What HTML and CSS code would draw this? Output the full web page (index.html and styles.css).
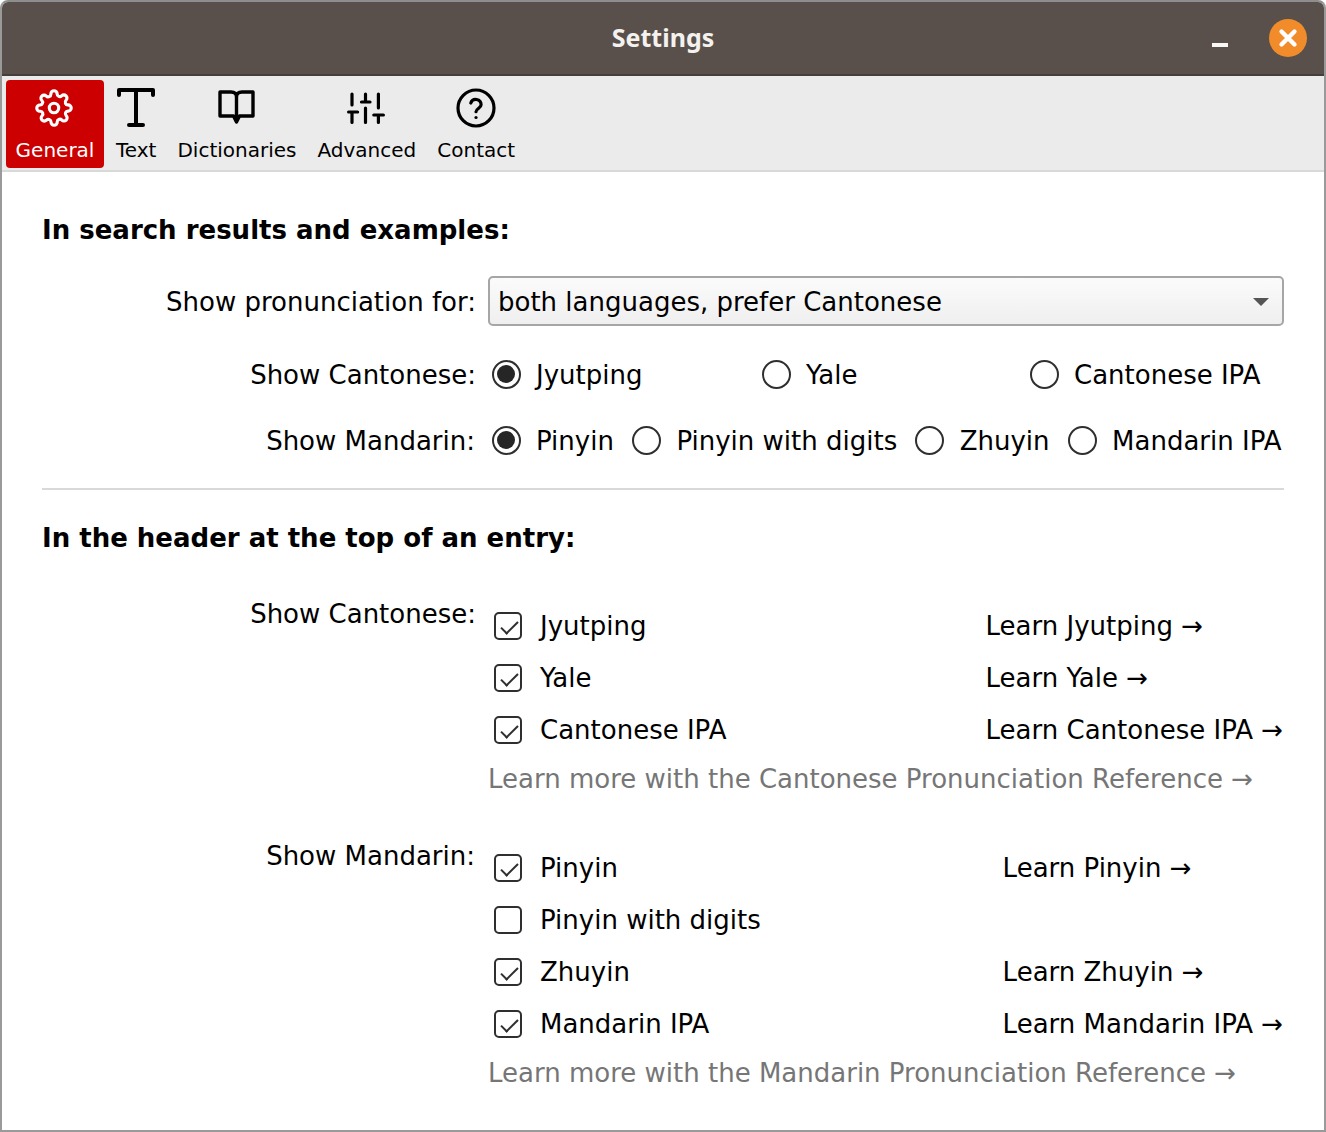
FILE: index.html
```html
<!DOCTYPE html>
<html lang="en">
<head>
<meta charset="utf-8">
<title>Settings</title>
<link rel="stylesheet" href="styles.css">
</head>
<body>
<div class="window">
  <header class="titlebar">
    <h1 class="title">Settings</h1>
    <div class="controls">
      <span class="minimize"></span>
      <span class="close">
        <svg viewBox="0 0 38 38" width="38" height="38"><path d="M12.5 12.5 25.5 25.5M25.5 12.5 12.5 25.5" stroke="#fff" stroke-width="4.4" stroke-linecap="round" fill="none"/></svg>
      </span>
    </div>
  </header>
  <nav class="toolbar">
    <div class="tool active">
      <svg class="tool-icon gear" viewBox="-2.700 -2.700 29.400 29.400" width="46" height="46" fill="none" stroke="#fff" stroke-width="2" stroke-linecap="round" stroke-linejoin="round"><circle cx="12" cy="12" r="3"/><path d="M19.4 15a1.65 1.65 0 0 0 .33 1.82l.06.06a2 2 0 1 1-2.83 2.83l-.06-.06a1.65 1.65 0 0 0-1.82-.33 1.65 1.65 0 0 0-1 1.51V21a2 2 0 1 1-4 0v-.09a1.65 1.65 0 0 0-1-1.51 1.65 1.65 0 0 0-1.82.33l-.06.06a2 2 0 1 1-2.83-2.83l.06-.06a1.65 1.65 0 0 0 .33-1.82 1.65 1.65 0 0 0-1.51-1H3a2 2 0 1 1 0-4h.09a1.65 1.65 0 0 0 1.51-1 1.65 1.65 0 0 0-.33-1.82l-.06-.06a2 2 0 1 1 2.83-2.83l.06.06a1.65 1.65 0 0 0 1.82.33h.08a1.65 1.65 0 0 0 1-1.51V3a2 2 0 1 1 4 0v.09a1.65 1.65 0 0 0 1 1.51 1.65 1.65 0 0 0 1.82-.33l.06-.06a2 2 0 1 1 2.83 2.83l-.06.06a1.65 1.65 0 0 0-.33 1.82v.08a1.65 1.65 0 0 0 1.51 1H21a2 2 0 1 1 0 4h-.09a1.65 1.65 0 0 0-1.51 1z"/></svg>
      <span>General</span>
    </div>
    <div class="tool">
      <svg class="tool-icon" viewBox="0 0 46 46" width="46" height="46" fill="none" stroke="#000" stroke-width="4" stroke-linecap="round" stroke-linejoin="round"><path d="M6 10V5H40V10M23 5V40M16 40H30"/></svg>
      <span>Text</span>
    </div>
    <div class="tool">
      <svg class="tool-icon" viewBox="0 0 46 46" width="46" height="46" fill="none" stroke="#000" stroke-width="3.400" stroke-linejoin="round" stroke-linecap="round"><path d="M6 7H17Q22.500 7 22.500 12V33M39 7H28Q22.500 7 22.500 12M6 7V31H19.500L22.500 37L25.500 31H39V7"/></svg>
      <span>Dictionaries</span>
    </div>
    <div class="tool">
      <svg class="tool-icon" viewBox="0 0 46 46" width="46" height="46" fill="none" stroke="#000" stroke-width="3.200" stroke-linecap="round"><path d="M8 9V20M4.600 27H13.600M8 27V37.500M21.500 9V17M17.500 17H26M21.500 23V37.500M34.400 9V23M29.800 30H39.400M34.400 30V37.500"/></svg>
      <span>Advanced</span>
    </div>
    <div class="tool">
      <svg class="tool-icon" viewBox="0 0 46 46" width="46" height="46" fill="none" stroke="#000" stroke-width="3.200" stroke-linecap="round"><circle cx="23" cy="23" r="18"/><path d="M17.800 18a5.300 5.300 0 0 1 10.300 1.700c0 3.500-5.100 4-5.100 7"/><path d="M23 32.500h.02"/></svg>
      <span>Contact</span>
    </div>
  </nav>
  <main class="content">
    <h2 class="heading">In search results and examples:</h2>
    <div class="form-row select-row">
      <label class="row-label">Show pronunciation for:</label>
      <div class="select"><span>both languages, prefer Cantonese</span><i class="caret"></i></div>
    </div>
    <div class="form-row radio-row radio-row-a">
      <label class="row-label">Show Cantonese:</label>
      <div class="radios radios-even">
        <span class="opt"><i class="radio on"></i>Jyutping</span>
        <span class="opt"><i class="radio"></i>Yale</span>
        <span class="opt"><i class="radio"></i>Cantonese IPA</span>
      </div>
    </div>
    <div class="form-row radio-row radio-row-b">
      <label class="row-label label-mandarin">Show Mandarin:</label>
      <div class="radios radios-tight">
        <span class="opt"><i class="radio on"></i>Pinyin</span>
        <span class="opt"><i class="radio"></i>Pinyin with digits</span>
        <span class="opt"><i class="radio"></i>Zhuyin</span>
        <span class="opt"><i class="radio"></i>Mandarin IPA</span>
      </div>
    </div>
    <hr class="divider">
    <h2 class="heading heading-2">In the header at the top of an entry:</h2>

    <div class="form-row check-group group-a">
      <label class="row-label">Show Cantonese:</label>
      <div class="group-body">
        <div class="checks">
          <span class="opt check-opt"><i class="check on"></i>Jyutping</span><a class="learn">Learn Jyutping →</a>
          <span class="opt check-opt"><i class="check on"></i>Yale</span><a class="learn">Learn Yale →</a>
          <span class="opt check-opt"><i class="check on"></i>Cantonese IPA</span><a class="learn">Learn Cantonese IPA →</a>
        </div>
        <a class="more">Learn more with the Cantonese Pronunciation Reference →</a>
      </div>
    </div>

    <div class="form-row check-group group-b">
      <label class="row-label label-mandarin">Show Mandarin:</label>
      <div class="group-body">
        <div class="checks">
          <span class="opt check-opt"><i class="check on"></i>Pinyin</span><a class="learn">Learn Pinyin →</a>
          <span class="opt check-opt"><i class="check"></i>Pinyin with digits</span><a class="learn"></a>
          <span class="opt check-opt"><i class="check on"></i>Zhuyin</span><a class="learn">Learn Zhuyin →</a>
          <span class="opt check-opt"><i class="check on"></i>Mandarin IPA</span><a class="learn">Learn Mandarin IPA →</a>
        </div>
        <a class="more">Learn more with the Mandarin Pronunciation Reference →</a>
      </div>
    </div>
  </main>
</div>
</body>
</html>
```
FILE: styles.css
```css
* { box-sizing: border-box; }
html, body { margin: 0; padding: 0; background: #fff; }
body { font-family: "DejaVu Sans", sans-serif; color: #000; }
.window {
  width: 1326px;
  height: 1132px;
  border: 2px solid #9a9a9a;
  border-top-color: #8e8e8e;
  border-radius: 8px 8px 0 0;
  overflow: hidden;
  display: flex;
  flex-direction: column;
  background: #fff;
}
.titlebar {
  height: 74px;
  flex: none;
  background: #59504b;
  border-bottom: 2px solid #463e3a;
  display: flex;
  align-items: center;
  justify-content: center;
  position: relative;
}
.title { margin: 0; padding-bottom: 2px; font-size: 25px; font-weight: 700; color: #f4f2ef; font-family: "Noto Sans", "DejaVu Sans", sans-serif; }
.controls { position: absolute; right: 17px; top: 17px; display: flex; align-items: center; gap: 41px; }
.minimize { width: 16px; height: 4px; margin-top: 13px; background: #f7f7f7; }
.close { width: 38px; height: 38px; border-radius: 50%; background: #f28b2a; display: block; }
.close svg { display: block; }
.toolbar {
  height: 96px;
  flex: none;
  background: #ebebeb;
  border-bottom: 2px solid #d9d9d9;
  padding: 4px 0 0 4px;
  display: flex;
  gap: 1px;
  align-items: flex-start;
  font-size: 20px;
}
.tool { display: flex; flex-direction: column; align-items: center; height: 88px; padding: 5px 10px 0; white-space: nowrap; border-radius: 4px; }
.tool span { margin-top: 5px; line-height: 28px; }
.tool-icon { display: block; margin: 0 -8px; }
.tool-icon.gear { margin: 0 -7px 0 -9px; }
.active { background: #cc0000; color: #fff; width: 98px; margin-right: 1px; }

.content { flex: 1; padding: 0 40px; font-size: 26px; }
.heading { margin: 0; font-size: 26px; font-weight: 700; line-height: 32px; padding-top: 42px; }
.heading-2 { padding-top: 32px; }
.form-row { display: grid; grid-template-columns: 434px 1fr; column-gap: 12px; align-items: center; }
.row-label { text-align: right; white-space: nowrap; line-height: 34px; }
.label-mandarin { padding-right: 1px; }
.select-row { margin-top: 30px; height: 50px; }
.select-row .row-label { padding-top: 1px; }
.select {
  height: 50px;
  border: 2px solid #a6a6a6;
  border-radius: 5px;
  background: linear-gradient(#fbfbfb, #efefef);
  padding: 0 9px 0 8px;
  display: flex;
  align-items: center;
  justify-content: space-between;
  line-height: 34px;
}
.select span { padding-top: 2px; }
.caret { width: 0; height: 0; border-left: 8px solid transparent; border-right: 8px solid transparent; border-top: 8px solid #555; margin-right: 4px; margin-top: 2px; }
.radio-row { height: 34px; }
.radio-row-a { margin-top: 31px; }
.radio-row-b { margin-top: 32px; }
.radio-row .row-label { height: 34px; padding-top: 1px; }
.radios { display: flex; align-items: center; padding-left: 3.500px; }
.radios .opt { height: 34px; padding-top: 1px; align-items: flex-start; }
.radios-even { display: grid; grid-template-columns: 270px 268px auto; }
.radios-tight { gap: 18px; }
.opt { display: inline-flex; align-items: center; white-space: nowrap; line-height: 34px; }
.radio { width: 29px; height: 29px; flex: none; border: 2px solid #2f2f2f; border-radius: 50%; margin: 1.500px 15.500px 0 0; display: block; position: relative; background: #fff; }
.radio.on::after { content: ""; position: absolute; inset: 3.500px; border-radius: 50%; background: #262626; }
.divider { border: 0; height: 2px; background: #d9d9d9; margin: 31px 0 0; }
.group-a { margin-top: 43px; }
.group-b { margin-top: 43px; }
.check-group { align-items: start; }
.group-body { min-width: 0; }
.checks { display: grid; grid-template-columns: 1fr auto; grid-auto-rows: 52px; padding-top: 2px; align-items: center; }
.check-opt { padding-left: 6px; padding-top: 2px; }
.check { width: 28px; height: 28px; flex: none; border: 2px solid #2f2f2f; border-radius: 5px; margin-right: 18px; display: block; position: relative; background: #fff; }
.check.on::after {
  content: "";
  position: absolute;
  left: 4.500px;
  top: 7px;
  width: 15px;
  height: 7px;
  border-left: 2px solid #2f2f2f;
  border-bottom: 2px solid #2f2f2f;
  transform: rotate(-45deg);
}
.learn { line-height: 34px; white-space: nowrap; padding: 1px 1px 0 0; }
.more { display: block; color: #767676; line-height: 34px; white-space: nowrap; margin-top: 7px; }
```
